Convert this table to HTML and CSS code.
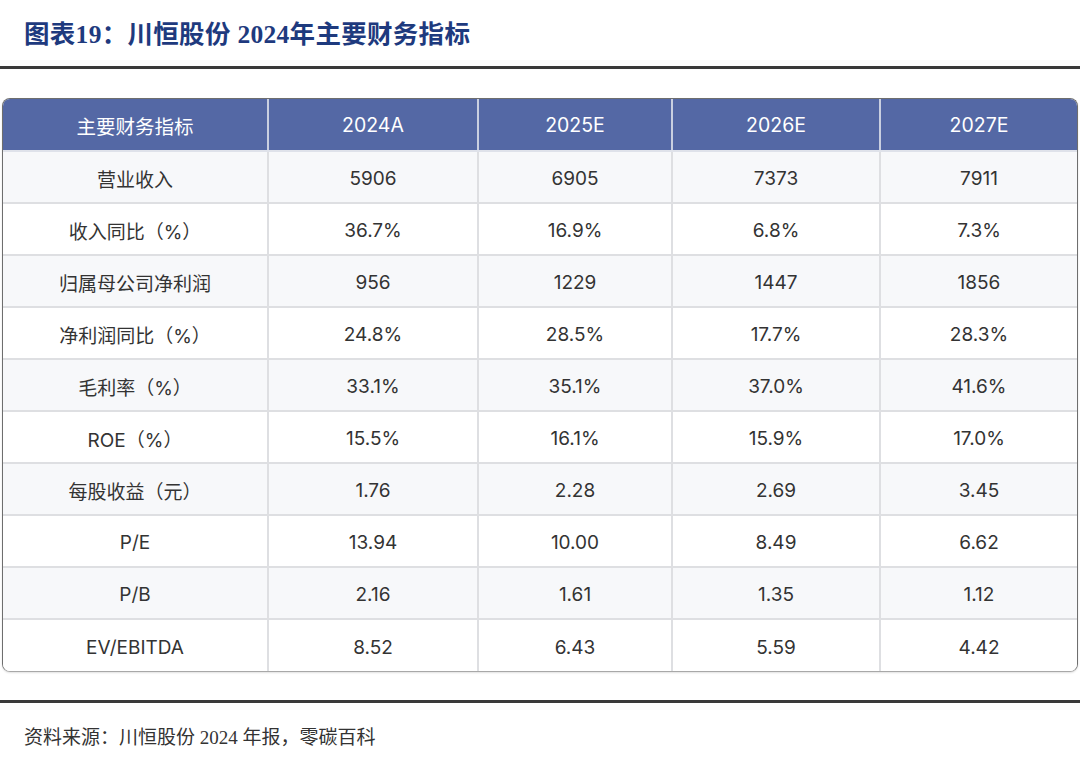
FILE: index.html
```html
<!DOCTYPE html>
<html lang="zh">
<head>
<meta charset="utf-8">
<title>川恒股份 2024年主要财务指标</title>
<link rel="stylesheet" href="styles.css">
</head>
<body>
<div class="page">
  <h1 class="title">图表19：川恒股份 2024年主要财务指标</h1>
  <div class="rule"></div>
  <div class="table-wrap">
    <table class="fin">
      <colgroup>
        <col class="c1"><col class="c2"><col class="c3"><col class="c4"><col class="c5">
      </colgroup>
      <thead>
        <tr><th>主要财务指标</th><th>2024A</th><th>2025E</th><th>2026E</th><th>2027E</th></tr>
      </thead>
      <tbody>
        <tr><td>营业收入</td><td>5906</td><td>6905</td><td>7373</td><td>7911</td></tr>
        <tr><td>收入同比（%）</td><td>36.7%</td><td>16.9%</td><td>6.8%</td><td>7.3%</td></tr>
        <tr><td>归属母公司净利润</td><td>956</td><td>1229</td><td>1447</td><td>1856</td></tr>
        <tr><td>净利润同比（%）</td><td>24.8%</td><td>28.5%</td><td>17.7%</td><td>28.3%</td></tr>
        <tr><td>毛利率（%）</td><td>33.1%</td><td>35.1%</td><td>37.0%</td><td>41.6%</td></tr>
        <tr><td>ROE（%）</td><td>15.5%</td><td>16.1%</td><td>15.9%</td><td>17.0%</td></tr>
        <tr><td>每股收益（元）</td><td>1.76</td><td>2.28</td><td>2.69</td><td>3.45</td></tr>
        <tr><td>P/E</td><td>13.94</td><td>10.00</td><td>8.49</td><td>6.62</td></tr>
        <tr><td>P/B</td><td>2.16</td><td>1.61</td><td>1.35</td><td>1.12</td></tr>
        <tr><td>EV/EBITDA</td><td>8.52</td><td>6.43</td><td>5.59</td><td>4.42</td></tr>
      </tbody>
    </table>
  </div>
  <div class="rule rule-bottom"></div>
  <p class="source">资料来源：川恒股份 2024 年报，零碳百科</p>
</div>
</body>
</html>
```

FILE: styles.css
```css
html, body {
  margin: 0;
  padding: 0;
  background: #ffffff;
}

.page {
  width: 1080px;
  height: 762px;
  overflow: hidden;
}

.title {
  margin: 0;
  height: 66px;
  padding: 0 0 3px 24px;
  box-sizing: border-box;
  display: flex;
  align-items: center;
  font-family: "Liberation Serif", "Noto Sans CJK SC", serif;
  font-weight: bold;
  font-size: 25.5px;
  color: #1e3a7e;
  letter-spacing: 0.3px;
}

.rule {
  height: 3px;
  background: #3a3a3a;
}

.table-wrap {
  margin: 29px 2px 0 2px;
  border: 1px solid #6e6e6e;
  border-bottom-color: #a8a8a8;
  border-radius: 8px;
  overflow: hidden;
  box-shadow: 0 1px 2px rgba(0,0,0,0.12);
}

.fin {
  width: 100%;
  border-collapse: collapse;
  table-layout: fixed;
  font-family: Inter, "Noto Sans CJK SC", sans-serif;
  font-size: 19px;
  color: #333333;
}

.c1 { width: 265px; }
.c2 { width: 210px; }
.c3 { width: 194px; }
.c4 { width: 208px; }
.c5 { width: auto; }

.fin td {
  height: 47px;
  padding: 3px 0 0 0;
  text-align: center;
  vertical-align: middle;
  border: 2px solid #dedfe2;
}

.fin th {
  height: 50px;
  padding: 1px 0 0 0;
  text-align: center;
  vertical-align: middle;
  border: 2px solid #c9cfe0;
  border-top: none;
  border-bottom-color: #dfe2ea;
  background: #5468a5;
  color: #ffffff;
  font-weight: normal;
  font-size: 19.5px;
}

.fin tr > :first-child { border-left: none; }
.fin tr > :last-child { border-right: none; }
.fin tbody tr:last-child td { border-bottom: none; height: 48px; }

.fin tbody tr:nth-child(odd) td { background: #f7f8fa; }
.fin tbody tr:nth-child(even) td { background: #ffffff; }

.rule-bottom {
  margin-top: 28px;
}

.source {
  margin: 0;
  padding: 19px 0 0 24px;
  font-family: "Liberation Serif", "Noto Sans CJK SC", serif;
  font-size: 19px;
  color: #333333;
}
```
